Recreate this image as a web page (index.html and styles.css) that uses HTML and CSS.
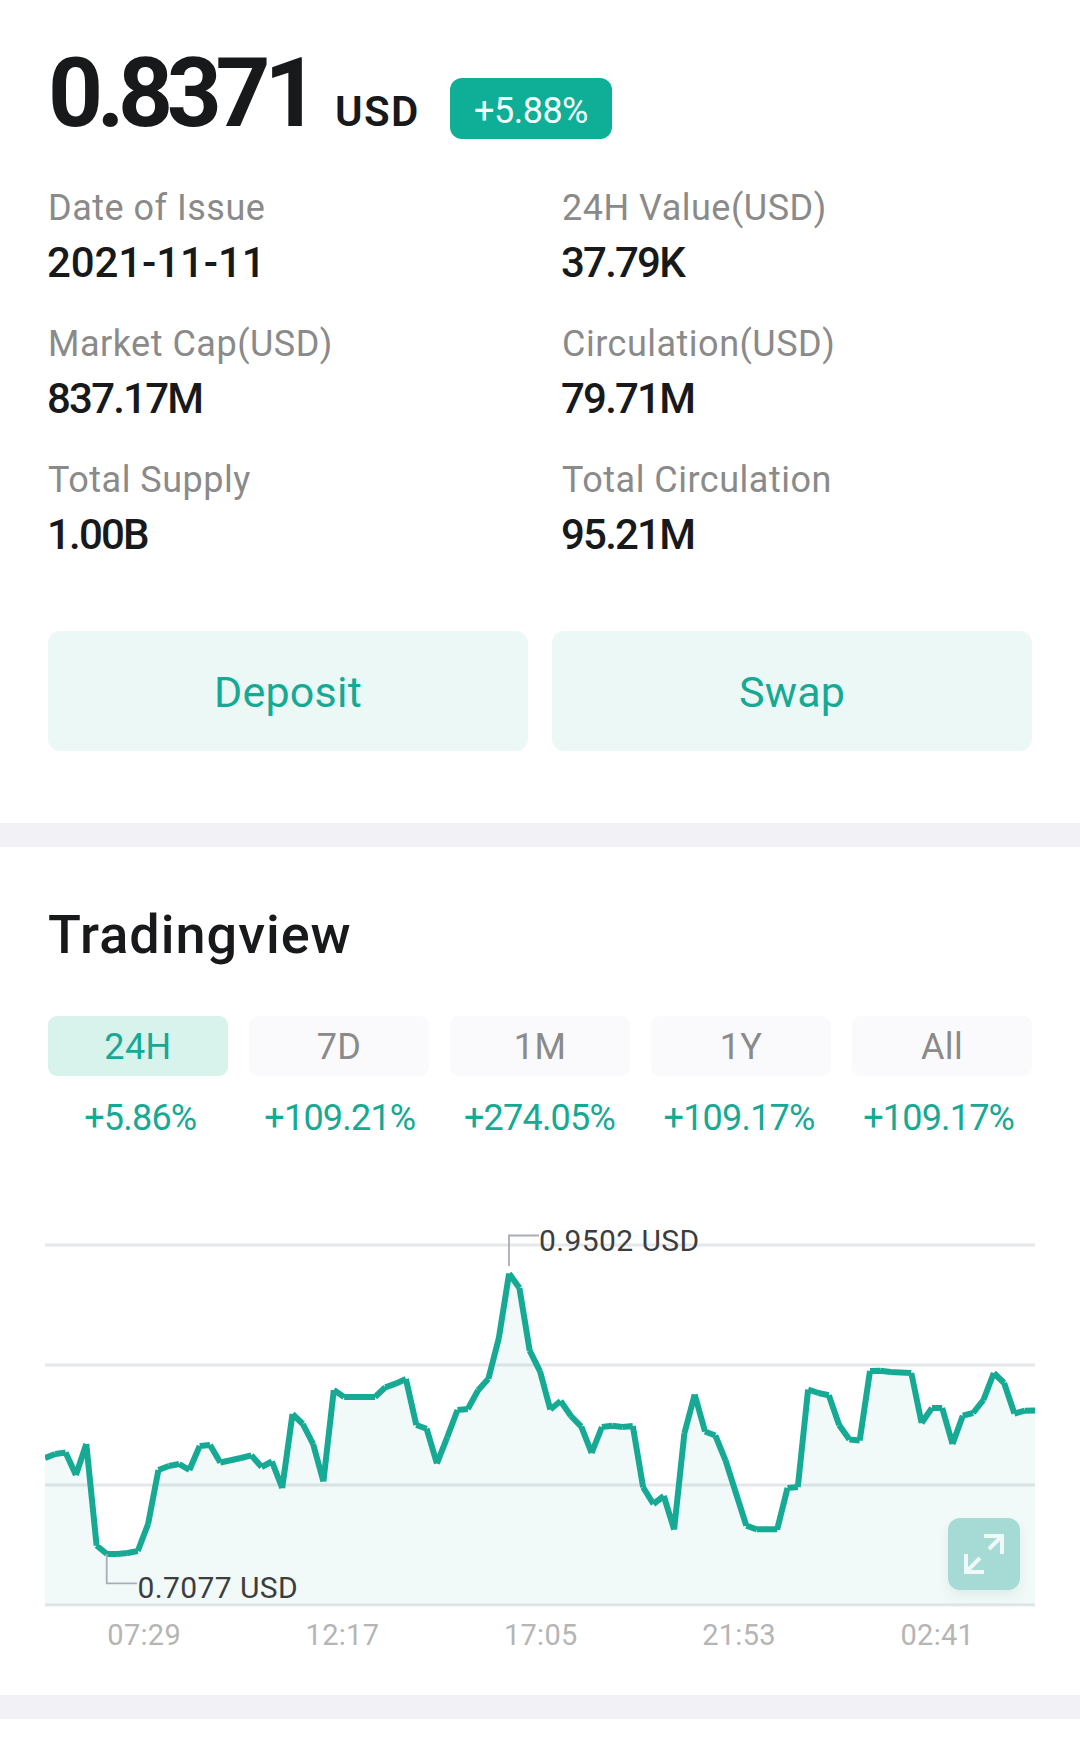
FILE: index.html
```html
<!DOCTYPE html>
<html lang="en">
<head>
    <meta charset="UTF-8">
    <title>Tradingview</title>
    <link rel="stylesheet" href="styles.css">
</head>
<body>

    <section class="summary">
        <div class="price-row">
            <span class="price">0.8371</span>
            <span class="currency">USD</span>
            <span class="badge">+5.88%</span>
        </div>

        <dl class="stats">
            <div class="stat"><dt>Date of Issue</dt><dd class="date">2021-11-11</dd></div>
            <div class="stat"><dt>24H Value(USD)</dt><dd>37.79K</dd></div>
            <div class="stat"><dt>Market Cap(USD)</dt><dd>837.17M</dd></div>
            <div class="stat"><dt>Circulation(USD)</dt><dd>79.71M</dd></div>
            <div class="stat"><dt>Total Supply</dt><dd>1.00B</dd></div>
            <div class="stat"><dt>Total Circulation</dt><dd>95.21M</dd></div>
        </dl>

        <div class="actions">
            <button class="action">Deposit</button>
            <button class="action">Swap</button>
        </div>
    </section>

    <section class="trading">
        <h2>Tradingview</h2>

        <div class="tabs">
            <button class="tab active">24H</button>
            <button class="tab">7D</button>
            <button class="tab">1M</button>
            <button class="tab">1Y</button>
            <button class="tab">All</button>
        </div>
        <div class="changes">
            <span>+5.86%</span>
            <span>+109.21%</span>
            <span>+274.05%</span>
            <span>+109.17%</span>
            <span>+109.17%</span>
        </div>

        <div class="chart">
            <svg class="plot" width="990" height="410" viewBox="45 1200 990 410">
                <path class="grid" d="M45 1245H1035M45 1365H1035M45 1485H1035M45 1605H1035"/>
                <path id="area" class="area"/>
                <path id="line" class="line"/>
                <path class="pointer" d="M106.7 1554V1583.3H137M509 1266V1235.5H539"/>
                <text class="mark" x="137.5" y="1597.6">0.7077 USD</text>
                <text class="mark" x="539" y="1250.8">0.9502 USD</text>
            </svg>
            <button class="expand" aria-label="Full screen">
                <svg width="72" height="72" viewBox="0 0 72 72">
                    <path d="M36 18H54V36M53 19L41 31M18 36V54H36M19 53L32 40"/>
                </svg>
            </button>
        </div>
        <div class="axis">
            <span>07:29</span>
            <span>12:17</span>
            <span>17:05</span>
            <span>21:53</span>
            <span>02:41</span>
        </div>
    </section>

    <script src="chart.js"></script>
</body>
</html>
```
FILE: styles.css
```css
* {
    box-sizing: border-box;
}
body {
    margin: 0;
    background: #fff;
    color: #17191b;
    font-family: Roboto, "Liberation Sans", sans-serif;
}
button {
    border: 0;
    padding: 2px 0 0;
    font-family: inherit;
}
.summary {
    height: 847px;
    padding: 43px 48px 0;
    border-bottom: 24px solid #f2f1f6;
}
.price-row {
    display: flex;
    align-items: baseline;
    height: 100px;
    line-height: 100px;
}
.price {
    width: 287px;
    font-size: 96px;
    font-weight: 700;
    letter-spacing: -6.4px;
}
.currency {
    width: 115px;
    font-size: 42px;
    font-weight: 600;
    letter-spacing: 1.4px;
}
.badge {
    align-self: flex-start;
    width: 162px;
    height: 61px;
    margin-top: 35px;
    border-radius: 12px;
    background: #0fae96;
    color: #f2fffc;
    font-size: 36px;
    line-height: 66px;
    text-align: center;
    letter-spacing: -0.5px;
}
.stats {
    display: grid;
    grid-template-columns: 514px 1fr;
    grid-auto-rows: 136px;
    margin: 38px 0 0;
}
.stat dt {
    color: #8a8a8a;
    font-size: 36px;
    line-height: 54px;
    letter-spacing: 0.5px;
}
.stat dd {
    margin: 0 0 0 -1px;
    font-size: 42px;
    font-weight: 500;
    line-height: 56px;
    letter-spacing: -1.8px;
}
.stat dd.date {
    letter-spacing: -0.1px;
}
.actions {
    display: flex;
    gap: 24px;
    margin-top: 42px;
}
.action {
    flex: 1;
    height: 120px;
    border-radius: 12px;
    background: #ebf8f6;
    color: #16a994;
    font-size: 43px;
    letter-spacing: 0.2px;
}
.trading {
    height: 872px;
    padding: 0 45px;
    border-bottom: 24px solid #f2f1f6;
}
h2 {
    margin: 0 3px;
    padding-top: 56px;
    height: 169px;
    font-size: 54px;
    font-weight: 500;
    line-height: 64px;
    letter-spacing: 1px;
}
.tabs {
    display: flex;
    gap: 21px;
    margin: 0 3px;
}
.tab {
    flex: 1;
    height: 60px;
    border-radius: 9px;
    background: #fafafd;
    color: #8a8a8a;
    font-size: 36px;
    letter-spacing: 0.4px;
}
.tab.active {
    background: #d8f2ec;
    color: #16a994;
}
.changes {
    display: grid;
    grid-template-columns: repeat(5, 199.6px);
    margin: 15px -4.5px 0;
    height: 109px;
    color: #16a994;
    font-size: 36px;
    line-height: 54px;
    letter-spacing: -0.8px;
    text-align: center;
}
.chart {
    position: relative;
    height: 410px;
}
.plot {
    display: block;
}
.grid {
    stroke: #e6e7eb;
    stroke-width: 3;
}
.area {
    fill: #0fae96;
    fill-opacity: 0.06;
}
.line {
    fill: none;
    stroke: #16aa95;
    stroke-width: 6;
}
.pointer {
    fill: none;
    stroke: #a9acb9;
    stroke-width: 1.8;
}
.mark {
    fill: #3b3d3f;
    font-size: 30px;
    letter-spacing: 0.4px;
}
.expand {
    position: absolute;
    right: 15px;
    bottom: 20px;
    width: 72px;
    height: 72px;
    padding: 0;
    border-radius: 12px;
    background: #a6dbd5;
    box-shadow: 0 6px 12px rgba(20, 80, 75, 0.08);
}
.expand svg {
    display: block;
    fill: none;
    stroke: #effaf8;
    stroke-width: 4;
}
.axis {
    display: grid;
    grid-template-columns: repeat(5, 198.3px);
    padding-top: 7px;
    color: #b5b5b5;
    font-size: 29px;
    line-height: 36px;
    letter-spacing: 0.3px;
    text-align: center;
}
```
FILE: chart.js
```js
// y of each sample, spread evenly over the plot width
const points = [
    1458, 1454, 1452.5, 1475, 1444, 1545.5, 1554, 1554, 1553, 1551, 1524, 1470,
    1466, 1464, 1470, 1446, 1445, 1462.5, 1460.3, 1458, 1455.3, 1467, 1461.5, 1488,
    1414, 1424, 1444, 1481.5, 1390, 1397, 1397, 1397, 1397, 1387.3, 1383.7, 1379,
    1425, 1428.7, 1463.5, 1437.3, 1410, 1409, 1390.3, 1378.7, 1338.3, 1273.5, 1288, 1350.7,
    1371.3, 1409.5, 1401, 1416, 1426.7, 1453, 1427, 1425.7, 1427, 1426, 1487.3, 1504,
    1496, 1529.5, 1433.3, 1394.5, 1431.5, 1435.5, 1460.7, 1493, 1525.7, 1529.3, 1529.3, 1529.3,
    1488, 1487, 1389.5, 1393, 1395.3, 1425, 1439.5, 1440.5, 1371, 1370.7, 1372, 1372.5,
    1373, 1423, 1408, 1408, 1444, 1415.7, 1413, 1400, 1373, 1383, 1413.5, 1410.7, 1410.5
];

const step = 990 / (points.length - 1);
const coords = points.map((y, i) => (45 + i * step).toFixed(1) + ' ' + y);

// every segment is stroked on its own, with butt ends
let segments = '';
for (let i = 1; i < coords.length; i++) {
    segments += 'M' + coords[i - 1] + 'L' + coords[i];
}

document.getElementById('line').setAttribute('d', segments);
document.getElementById('area').setAttribute('d', 'M' + coords.join('L') + 'V1605H45Z');
```
